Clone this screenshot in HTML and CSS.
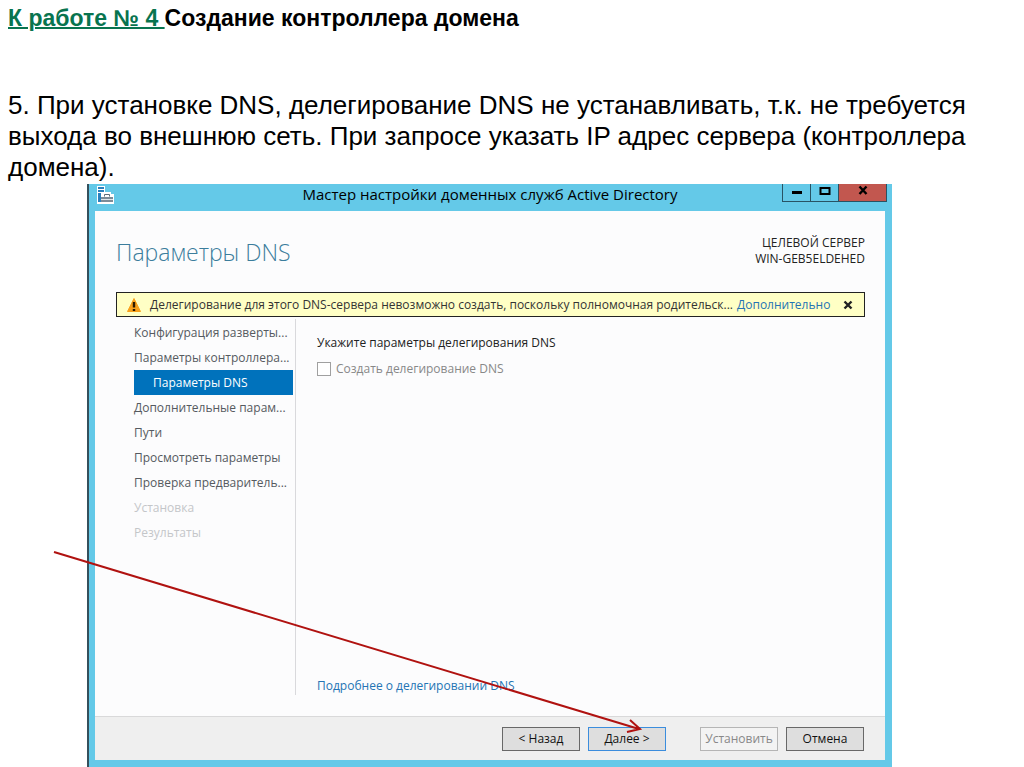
FILE: index.html
```html
<!DOCTYPE html>
<html lang="ru">
<head>
<meta charset="utf-8">
<meta name="viewport" content="width=device-width, initial-scale=1">
<title>Создание контроллера домена</title>
<link rel="stylesheet" href="styles.css">
</head>
<body class="slide">
<header class="slide-head">
  <h1 class="slide-title"><span class="work">К работе № 4 </span>Создание контроллера домена</h1>
</header>
<p class="slide-text">5. При установке DNS, делегирование DNS не устанавливать, т.к. не требуется выхода во внешнюю сеть. При запросе указать IP адрес сервера (контроллера домена).</p>
<main class="window">
  <div class="titlebar">
    <svg class="app-icon" width="18" height="18" viewBox="0 0 18 18" aria-hidden="true">
      <path d="M0 0h8v6h6v2h3v10H0z" fill="#fff"/>
      <path d="M1 1h6v2H1zM1 4h6v2H1zM1 7h3v9H1z" fill="#2a80bd"/>
      <path d="M4 11h12v5H4z" fill="#7c8b97"/>
      <path d="M7.500 10.500v-2h5v2" fill="none" stroke="#5d6c78"/>
      <path d="M4 13.500h12" stroke="#dfe6ea"/>
    </svg>
    <div class="window-title">Мастер настройки доменных служб Active Directory</div>
    <div class="window-controls">
      <button class="control" aria-label="Свернуть"><svg width="12" height="10" viewBox="0 0 12 10"><path d="M1 7.500h10" stroke="#000" stroke-width="3"/></svg></button>
      <button class="control" aria-label="Развернуть"><svg width="12" height="10" viewBox="0 0 12 10"><path d="M1.500 3h9v6h-9z" fill="none" stroke="#000" stroke-width="2"/></svg></button>
      <button class="control control-close" aria-label="Закрыть"><svg width="12" height="10" viewBox="0 0 12 10"><path d="M2.500 1.500l7 7.500M9.500 1.500l-7 7.500" stroke="#000" stroke-width="2.400"/></svg></button>
    </div>
  </div>
  <div class="client">
    <div class="page-head">
      <h2 class="page-title">Параметры DNS</h2>
      <div class="target">ЦЕЛЕВОЙ СЕРВЕР<br>WIN-GEB5ELDEHED</div>
    </div>
    <div class="warning" role="alert">
      <svg class="warning-icon" width="16" height="16" viewBox="0 0 16 16" aria-hidden="true">
        <path d="M8 1.500L14.500 14.500H1.500z" fill="#f9a11b" stroke="#f9a11b" stroke-linejoin="round"/>
        <path d="M8 5v5.500M8 12v2" stroke="#2b1a00" stroke-width="2.400"/>
      </svg>
      <span class="warning-text">Делегирование для этого DNS-сервера невозможно создать, поскольку полномочная родительск...</span>
      <a class="link" href="#more">Дополнительно</a>
      <button class="dismiss" aria-label="Закрыть предупреждение"><svg width="10" height="10" viewBox="0 0 10 10"><path d="M1.500 1.500l7 7M8.500 1.500l-7 7" stroke="#222" stroke-width="2.400"/></svg></button>
    </div>
    <div class="content">
      <nav class="steps">
        <a class="step" href="#deploy">Конфигурация разверты...</a>
        <a class="step" href="#controller">Параметры контроллера...</a>
        <a class="step step-current" href="#dns" aria-current="step">Параметры DNS</a>
        <a class="step" href="#extra">Дополнительные парам...</a>
        <a class="step" href="#paths">Пути</a>
        <a class="step" href="#review">Просмотреть параметры</a>
        <a class="step" href="#check">Проверка предваритель...</a>
        <a class="step step-off" aria-disabled="true">Установка</a>
        <a class="step step-off" aria-disabled="true">Результаты</a>
      </nav>
      <section class="panel">
        <p class="prompt">Укажите параметры делегирования DNS</p>
        <label class="option"><input class="check" type="checkbox" disabled>Создать делегирование DNS</label>
        <a class="link help" href="#help">Подробнее о делегировании DNS</a>
      </section>
    </div>
    <footer class="actions">
      <button class="button">&lt; Назад</button>
      <button class="button button-next">Далее &gt;</button>
      <button class="button button-install" disabled>Установить</button>
      <button class="button">Отмена</button>
    </footer>
  </div>
  <svg class="pointer" width="600" height="190" viewBox="0 0 600 190" aria-hidden="true">
    <path d="M4 4L589 181M580 172l10 9l-13 3" fill="none" stroke="#b01210" stroke-width="2"/>
  </svg>
</main>
</body>
</html>
```
FILE: styles.css
```css
* {
  box-sizing: border-box;
}

.slide {
  display: flex;
  flex-direction: column;
  min-height: 100vh;
  margin: 0;
  background: #fff;
  color: #000;
  font-family: "Liberation Sans", Arial, sans-serif;
}

.slide-head {
  padding: 4px 8px 0;
}

.slide-title {
  margin: 0;
  font-size: 23px;
  line-height: 28px;
  white-space: pre-wrap;
}

.work {
  color: #08744f;
  text-decoration: underline;
  text-decoration-thickness: 2px;
}

.slide-text {
  margin: 58px 40px 0 8px;
  font-size: 26px;
  line-height: 31px;
}

.window {
  position: relative;
  display: flex;
  flex: 1;
  flex-direction: column;
  margin: 1px 132px 0 87px;
  padding: 0 7px 7px 6px;
  border-left: 2px solid #34505c;
  background: #64c9e8;
  font-family: "Open Sans", "Noto Sans", sans-serif;
  font-size: 12px;
  line-height: 18px;
}

.titlebar {
  display: grid;
  grid-template-columns: 106px 1fr 106px;
  align-items: start;
  height: 27px;
}

.app-icon {
  margin: 2px;
}

.window-title {
  font-size: 15px;
  line-height: 21px;
  text-align: center;
  white-space: nowrap;
}

.window-controls {
  display: flex;
  justify-content: flex-end;
  margin: 0 -2px 0 0;
}

.control {
  width: 28px;
  height: 18px;
  padding: 0;
  border: 1px solid #285364;
  border-width: 0 0 1px 1px;
  background: transparent;
}

.control svg {
  display: block;
  margin: 0 auto 6px;
}

.control-close {
  width: 49px;
  border-right-width: 1px;
  background: #c2574f;
}

.client {
  display: flex;
  flex: 1;
  flex-direction: column;
  background: #fcfcfd;
}

.page-head {
  display: flex;
  align-items: flex-start;
  justify-content: space-between;
  height: 81px;
  padding: 24px 20px 0 21px;
}

.page-title {
  margin: 0;
  color: #3b7d9c;
  font-size: 23px;
  font-weight: 300;
  line-height: 34px;
}

.target {
  color: #222;
  line-height: 16px;
  text-align: right;
}

.warning {
  display: flex;
  align-items: center;
  height: 25px;
  margin: 0 20px 0 21px;
  padding: 0 10px 0 9px;
  border: 1px solid #222;
  background: #ffffc5;
  color: #333;
}

.warning-icon {
  flex: none;
  margin-right: 8px;
}

.warning-text {
  margin-right: 4px;
  white-space: nowrap;
}

.link {
  color: #2474b4;
  text-decoration: none;
  white-space: nowrap;
}

.dismiss {
  display: flex;
  margin-left: auto;
  padding: 1px;
  border: 0;
  background: none;
}

.content {
  display: flex;
  flex: 1;
  margin: 2px 20px 21px 39px;
}

.steps {
  width: 162px;
  padding: 1px 2px 0 0;
  border-right: 1px solid #d9d9dc;
}

.step {
  display: block;
  height: 25px;
  color: #555a60;
  line-height: 25px;
  text-decoration: none;
  white-space: nowrap;
}

.step-current {
  padding-left: 19px;
  background: #0072bc;
  color: #fff;
}

.step-off {
  color: #c4c6c9;
}

.panel {
  display: flex;
  flex: 1;
  flex-direction: column;
  align-items: flex-start;
  padding: 15px 0 0 21px;
}

.prompt {
  margin: 0 0 8px;
  color: #222;
}

.option {
  display: flex;
  align-items: center;
  gap: 5px;
  color: #888;
}

.check {
  appearance: none;
  width: 14px;
  height: 14px;
  margin: 0;
  border: 1px solid #a0a0a0;
  background: #fff;
}

.help {
  margin-top: auto;
}

.actions {
  display: flex;
  justify-content: flex-end;
  gap: 8px;
  padding: 10px 21px 9px;
  border-top: 1px solid #d9d9da;
  background: #efefef;
}

.button {
  width: 78px;
  height: 24px;
  padding: 0;
  border: 1px solid #686868;
  background: #dedede;
  color: #111;
  font: inherit;
}

.button-next {
  border-color: #3b8ddd;
}

.button-install {
  margin-left: 26px;
  border-color: #b5b5b5;
  background: #f3f3f3;
  color: #888;
}

.pointer {
  position: absolute;
  right: 242px;
  bottom: 29px;
  pointer-events: none;
}
```
